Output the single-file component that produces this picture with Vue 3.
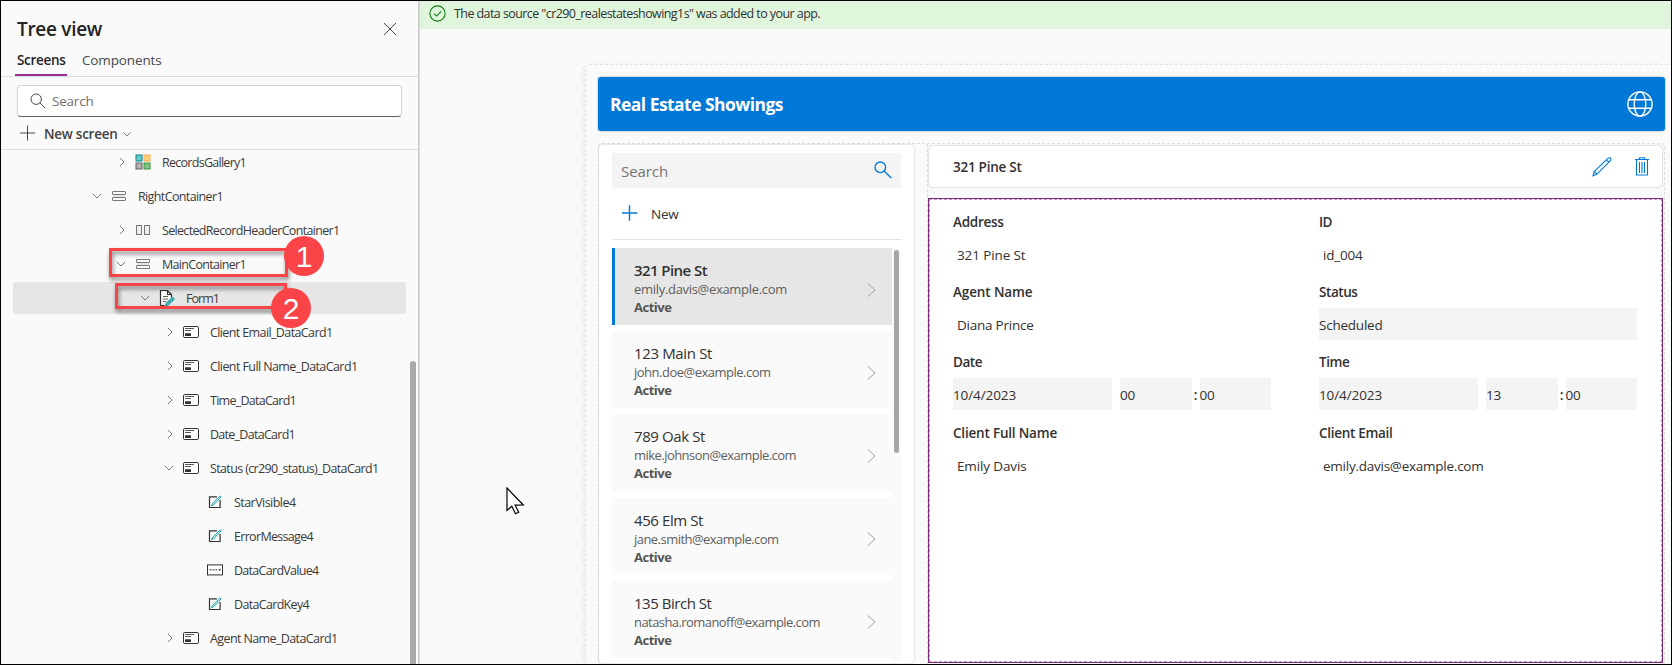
<script setup>
const rows = [
  { label: 'RecordsGallery1', level: 1, icon: 'gallery', arrow: 'right', w: 84 },
  { label: 'RightContainer1', level: 0, icon: 'vertical', arrow: 'down', w: 85 },
  { label: 'SelectedRecordHeaderContainer1', level: 1, icon: 'horizontal', arrow: 'right', w: 177.5 },
  { label: 'MainContainer1', level: 1, icon: 'vertical', arrow: 'down', w: 84 },
  { label: 'Form1', level: 2, icon: 'form', arrow: 'down', selected: true, w: 33 },
  { label: 'Client Email_DataCard1', level: 3, icon: 'card', arrow: 'right', w: 122.5 },
  { label: 'Client Full Name_DataCard1', level: 3, icon: 'card', arrow: 'right', w: 147.5 },
  { label: 'Time_DataCard1', level: 3, icon: 'card', arrow: 'right', w: 86 },
  { label: 'Date_DataCard1', level: 3, icon: 'card', arrow: 'right', w: 85 },
  { label: 'Status (cr290_status)_DataCard1', level: 3, icon: 'card', arrow: 'down', w: 168.5 },
  { label: 'StarVisible4', level: 4, icon: 'edit', w: 61.5 },
  { label: 'ErrorMessage4', level: 4, icon: 'edit', w: 79 },
  { label: 'DataCardValue4', level: 4, icon: 'combo', w: 84.5 },
  { label: 'DataCardKey4', level: 4, icon: 'edit', w: 75 },
  { label: 'Agent Name_DataCard1', level: 3, icon: 'card', arrow: 'right', w: 127.5 },
]

const records = [
  { title: '321 Pine St', email: 'emily.davis@example.com', tw: 73, ew: 153, selected: true },
  { title: '123 Main St', email: 'john.doe@example.com', tw: 78, ew: 136.5 },
  { title: '789 Oak St', email: 'mike.johnson@example.com', tw: 71, ew: 162 },
  { title: '456 Elm St', email: 'jane.smith@example.com', tw: 69, ew: 144.5 },
  { title: '135 Birch St', email: 'natasha.romanoff@example.com', tw: 77.5, ew: 186 },
]

const fields = [
  { label: 'Address', value: '321 Pine St', lw: 50.5, vw: 68.5 },
  { label: 'ID', value: 'id_004', lw: 13, vw: 39.5 },
  { label: 'Agent Name', value: 'Diana Prince', lw: 79.5, vw: 76.5 },
  { label: 'Status', value: 'Scheduled', kind: 'choice', lw: 38.5, vw: 63.5 },
  { label: 'Date', value: '10/4/2023', hour: '00', minute: '00', kind: 'date', lw: 29, vw: 63 },
  { label: 'Time', value: '10/4/2023', hour: '13', minute: '00', kind: 'date', lw: 30.5, vw: 63 },
  { label: 'Client Full Name', value: 'Emily Davis', lw: 104, vw: 69.5 },
  { label: 'Client Email', value: 'emily.davis@example.com', lw: 73.5, vw: 160.5 },
]

// Tracks each label so that it fills the width given for it.
const vFit = {
  mounted(el, { value }) {
    el.style.display = 'inline-block'
    el.style.whiteSpace = 'nowrap'
    const natural = el.getBoundingClientRect().width
    el.style.letterSpacing = `${(value - natural) / el.textContent.length}px`
  },
}
</script>

<template>
  <div class="studio">
    <aside class="tree">
      <header class="tree-head">
        <h1 v-fit="85">Tree view</h1>
        <svg class="close" width="14" height="14" viewBox="0 0 14 14"><path d="M1 1l12 12M13 1L1 13" /></svg>
      </header>
      <nav class="tabs">
        <div class="tab active"><span v-fit="48.5">Screens</span></div>
        <div class="tab"><span v-fit="79.5">Components</span></div>
      </nav>
      <div class="search">
        <svg width="16" height="16" viewBox="0 0 16 16"><circle cx="6.2" cy="6.2" r="5.2" /><path d="M10 10l5 5" /></svg>
        <span v-fit="41.5">Search</span>
      </div>
      <div class="new-screen">
        <svg width="16" height="16" viewBox="0 0 16 16"><path d="M7.500 .5v15M0 8h15" /></svg>
        <span v-fit="73.5">New screen</span>
        <svg class="caret" width="8" height="5" viewBox="0 0 8 5"><path d="M.5.5L4 4 7.500.5" /></svg>
      </div>
      <div class="rows">
        <div v-for="row in rows" :key="row.label" class="row" :class="['l' + row.level, { selected: row.selected }]">
          <span class="arrow">
            <svg v-if="row.arrow === 'right'" class="closed" width="6" height="10" viewBox="0 0 6 10"><path d="M.8.8L5 5 .8 9.200" /></svg>
            <svg v-else-if="row.arrow === 'down'" width="10" height="6" viewBox="0 0 10 6"><path d="M.8.8L5 5 9.200.8" /></svg>
          </span>
          <span class="glyph">
            <svg v-if="row.icon === 'gallery'" width="16" height="16" viewBox="0 0 16 16">
              <rect x="1" y="1" width="6" height="6" fill="#69cdcd" stroke="#038387" />
              <rect x="9" y="1" width="6" height="6" fill="#ffce83" stroke="#ffaa44" />
              <rect x="1" y="9" width="6" height="6" fill="#b3b0b0" stroke="#605e5c" />
              <rect x="9" y="9" width="6" height="6" fill="#85c287" stroke="#339b3a" />
            </svg>
            <svg v-else-if="row.icon === 'vertical'" width="14" height="12" viewBox="0 0 14 12">
              <g fill="none" stroke="#797775"><rect x=".5" y="1.500" width="13" height="3" rx=".5" /><rect x=".5" y="7.500" width="13" height="3" rx=".5" /></g>
              <path d="M1 6h12" stroke="#cfcfcf" />
            </svg>
            <svg v-else-if="row.icon === 'horizontal'" width="14" height="12" viewBox="0 0 14 12">
              <g fill="#eee" stroke="#797775"><rect x=".5" y="1.500" width="5" height="9" /><rect x="8.500" y="1.500" width="5" height="9" /></g>
            </svg>
            <svg v-else-if="row.icon === 'form'" width="16" height="18" viewBox="0 0 16 18">
              <path d="M1.500 16.500V1.500h7l4 4v3M8.500 1.500v4h4M1.500 16.500h4" fill="#fff" stroke="#323130" stroke-width="1.200" />
              <path d="M4 7.500h5M4 10h5M4 12.500h3" stroke="#605e5c" />
              <path d="M13.500 8l2 2-6 6-3 .9.900-3z" fill="#37b0b0" stroke="#038387" stroke-width=".6" />
            </svg>
            <svg v-else-if="row.icon === 'card'" width="16" height="12" viewBox="0 0 16 12">
              <rect x=".5" y=".5" width="15" height="11" rx="1.300" fill="#fff" stroke="#323130" />
              <path d="M2 2.500h9M2 4.500h6" stroke="#484644" stroke-width=".9" /><rect x="2" y="7.300" width="6" height="2.700" rx=".4" fill="#323130" stroke="none" />
            </svg>
            <svg v-else-if="row.icon === 'combo'" width="16" height="12" viewBox="0 0 16 12">
              <rect x=".5" y=".9" width="15" height="10" fill="#fff" stroke="#323130" />
              <path d="M2.500 5.800h2M5.500 5.800h2M8.500 5.800h1.500" stroke="#323130" /><path d="M11 5.200h3l-1.500 1.800z" fill="#323130" stroke="none" />
            </svg>
            <svg v-else width="14" height="14" viewBox="0 0 14 14">
              <path d="M9 1.900H1.500v10.600h10.600V5" fill="none" stroke="#323130" stroke-width="1.200" />
              <path d="M12.200.9l1 1-7.900 8.200-1.700.5.500-1.700z" fill="#e5ffff" stroke="#1a9fa0" />
            </svg>
          </span>
          <span v-fit="row.w" class="label">{{ row.label }}</span>
        </div>
      </div>
      <div class="tree-scroll"></div>
      <div class="mark mark-one"></div>
      <div class="mark mark-two"></div>
      <div class="badge badge-one">1</div>
      <div class="badge badge-two">2</div>
    </aside>

    <main class="stage">
      <div class="notice">
        <svg width="17" height="17" viewBox="0 0 17 17"><circle cx="8.500" cy="8.500" r="7.600" /><path d="M5 8.700l2.500 2.400 4.700-4.800" /></svg>
        <span v-fit="366">The data source "cr290_realestateshowing1s" was added to your app.</span>
      </div>
      <div class="canvas">
        <div class="app">
          <header class="app-bar">
            <span v-fit="173">Real Estate Showings</span>
            <svg width="26" height="26" viewBox="0 0 26 26">
              <circle cx="13" cy="13" r="12.100" /><ellipse cx="13" cy="13" rx="5.800" ry="12.100" /><path d="M2 8.700h22M2 17.300h22" />
            </svg>
          </header>
          <div class="panes">
            <section class="list">
              <div class="list-search">
                <span v-fit="47">Search</span>
                <svg width="18" height="18" viewBox="0 0 18 18"><circle cx="6.300" cy="6.300" r="5.300" /><path d="M10 10l7.300 7" /></svg>
              </div>
              <div class="list-new">
                <svg width="16" height="16" viewBox="0 0 16 16"><path d="M7.500 .3v15.400M0 8h15.400" /></svg>
                <span v-fit="27.5">New</span>
              </div>
              <div class="gallery">
                <div class="cards">
                  <article v-for="r in records" :key="r.title" class="card" :class="{ selected: r.selected }">
                    <div class="info">
                      <div class="title"><span v-fit="r.tw">{{ r.title }}</span></div>
                      <div class="email"><span v-fit="r.ew">{{ r.email }}</span></div>
                      <div class="state"><span v-fit="37.5">Active</span></div>
                    </div>
                    <svg width="9" height="14" viewBox="0 0 9 14"><path d="M.7.5L8 7 .7 13.500" /></svg>
                  </article>
                </div>
                <div class="bar"></div>
              </div>
            </section>
            <section class="detail">
              <header class="detail-head">
                <span v-fit="68.5">321 Pine St</span>
                <svg class="pencil" width="20" height="20" viewBox="0 0 20 20"><path d="M15.800 1.400q1.300-1.100 2.700-.3.900 1.300-.3 2.800L5 17.100 1 18.800l1.200-4.300zM14.300 2.900l2.600 2.500M2.200 14.500L5 17.100" /></svg>
                <svg class="bin" width="14" height="19" viewBox="0 0 14 19"><path d="M0 2.500h14M4.500 2V.8h5V2M1.500 3v15h11V3M4.500 5v11M7 5v11M9.500 5v11" /></svg>
              </header>
              <div class="form">
                <div v-for="f in fields" :key="f.label" class="field">
                  <div class="name"><span v-fit="f.lw">{{ f.label }}</span></div>
                  <div v-if="f.kind === 'date'" class="when">
                    <div class="box day"><span v-fit="f.vw">{{ f.value }}</span></div>
                    <div class="box"><span v-fit="15">{{ f.hour }}</span></div>
                    <span class="colon">:</span>
                    <div class="box"><span v-fit="15">{{ f.minute }}</span></div>
                  </div>
                  <div v-else-if="f.kind === 'choice'" class="box choice"><span v-fit="f.vw">{{ f.value }}</span></div>
                  <div v-else class="plain"><span v-fit="f.vw">{{ f.value }}</span></div>
                </div>
              </div>
            </section>
          </div>
        </div>
      </div>
      <svg class="pointer" width="19" height="28" viewBox="0 0 19 28"><path d="M1 1v22.500l4.800-4.300 3.700 7.500 3.200-1.500-3.600-7 8.200-.2z" /></svg>
    </main>
  </div>
</template>

<style>
body { margin: 0; overflow: hidden; background: #fafafa; }
</style>

<style scoped>
* { box-sizing: border-box; }
.studio { display: flex; height: 665px; border: 1px solid #000; background: #fafafa; overflow: hidden; font-family: "Open Sans", "Noto Sans", sans-serif; color: #323130; }
svg { display: block; flex: none; fill: none; stroke: #484644; }
.tree { position: relative; width: 418px; flex: none; display: flex; flex-direction: column; border-right: 1px solid #c8c8c8; box-shadow: 1px 0 1px #ddd; z-index: 1; }
.tree-head { display: flex; align-items: center; justify-content: space-between; height: 48px; padding: 7px 21px 0 16px; }
h1 { margin: 0; font-size: 19px; line-height: 24px; font-weight: 600; color: #242424; }
.tabs { height: 28px; display: flex; padding-left: 14px; border-bottom: 1px solid #dcdcdc; font-size: 13.500px; }
.tab { height: 27px; padding: 0 2px; margin-right: 13px; line-height: 23px; color: #484848; }
.tab.active { width: 52px; font-weight: 600; color: #242424; border-bottom: 2px solid #962f98; }
.search { margin: 8px 16px 0; width: 385px; height: 32px; border: 1px solid #d1d1d1; border-bottom-color: #616161; border-radius: 4px; background: #fff; display: flex; align-items: center; padding-left: 12px; gap: 6px; font-size: 13.500px; color: #707070; }
.new-screen { height: 33px; display: flex; align-items: center; padding-left: 19px; font-size: 13.500px; font-weight: 600; color: #424242; border-bottom: 1px solid #dcdcdc; }
.new-screen span { margin-left: 8px; padding-top: 1px; }
.new-screen .caret { margin: 3px 0 0 5px; stroke: #777; }
.rows { flex: 1; overflow: hidden; padding-left: 12px; display: flex; flex-direction: column; gap: 2px; }
.row { height: 32px; width: 393px; flex: none; display: flex; align-items: center; font-size: 12.500px; color: #3b3a39; border-radius: 3px; }
.row:first-child { margin-top: -4px; }
.row.selected { background: #e6e6e6; }
.label { padding-top: 1px; }
.l0 { padding-left: 76px; }
.l1 { padding-left: 100px; }
.l2 { padding-left: 124px; }
.l3 { padding-left: 148px; }
.l4 { padding-left: 172px; }
.arrow { width: 16px; display: flex; justify-content: center; }
.arrow svg { stroke: #797775; }
.arrow .closed { margin-left: 2px; }
.glyph { width: 18px; margin: 0 10px 0 5px; display: flex; justify-content: center; }
.tree-scroll { position: absolute; right: 2px; top: 360px; bottom: 0; width: 6px; border-radius: 3px 3px 0 0; background: #a9a9a9; }
.mark { position: absolute; border: 3px solid #fb4447; filter: drop-shadow(1px 3px 2px rgba(0, 0, 0, .5)); }
.mark-one { left: 108px; top: 247px; width: 179px; height: 29px; }
.mark-two { left: 114px; top: 282px; width: 172px; height: 26px; }
.badge { position: absolute; width: 40px; height: 40px; border-radius: 50%; background: #fb4447; color: #fff; font: 30px/41px "Liberation Sans", Arial, sans-serif; text-align: center; }
.badge-one { left: 283px; top: 235px; }
.badge-two { left: 270px; top: 287px; }

.stage { position: relative; flex: 1; min-width: 0; display: flex; flex-direction: column; }
.notice { height: 28px; flex: none; background: #dff6dd; display: flex; gap: 8px; padding: 4px 0 0 10px; font-size: 12.500px; line-height: 18px; color: #323130; }
.notice svg { stroke: #107c10; stroke-width: 1.100; }
.canvas { flex: 1; min-height: 0; padding: 35px 0 0 166px; background: radial-gradient(circle, #dcdcdc 0 1.200px, transparent 1.500px) 1px -1px / 24px 24px; }
.app { height: 620px; border: 1px dashed #e2e2e2; border-right: 0; border-radius: 5px 0 0 0; padding: 12px 6px 0 12px; background: #fafafa; box-shadow: -3px 2px 4px #f0f0f0; }
.app-bar { height: 54px; border-radius: 3px; background: #0078d7; box-shadow: 0 0 2px #999; color: #fff; font-size: 17.500px; font-weight: 700; display: flex; align-items: center; justify-content: space-between; padding: 0 12px; }
.app-bar svg { stroke: #fff; stroke-width: 1.400; }
.panes { margin-top: 12px; height: 522px; display: flex; border: 1px dashed #ddd; border-radius: 4px; }
.list { width: 315px; height: 518px; padding: 8px 13px 0; background: #fff; box-shadow: 0 0 2px #bbb; border-radius: 4px; flex: none; margin-top: 1px; }
.list-search { height: 35px; display: flex; align-items: center; justify-content: space-between; padding: 0 9px 0 9px; font-size: 15px; color: #757575; background: #f4f4f4; }
.list-search svg { stroke: #0078d7; stroke-width: 1.300; margin-bottom: 2px; }
.list-search span { padding-top: 1px; }
.list-new { height: 52px; display: flex; align-items: center; gap: 13px; padding: 0 0 1px 10px; font-size: 13.500px; border-bottom: 1px solid #e2e2e2; }
.list-new svg { stroke: #0078d7; stroke-width: 1.400; }
.list-new span { padding-top: 2px; }
.gallery { margin-top: 8px; height: 413px; display: flex; gap: 2px; background: linear-gradient(#fafafa, #fafafa) right / 9px 100% no-repeat; overflow: hidden; }
.cards { width: 280px; display: flex; flex-direction: column; gap: 6.200px; background: #fff; }
.card { flex: none; height: 77px; display: flex; align-items: center; justify-content: space-between; padding: 0 16px 0 22px; background: #fafafa; }
.card svg { stroke: #a0a0a0; margin-top: 6px; }
.card.selected { background: #e6e6e6; border-left: 3px solid #0078d7; padding-left: 19px; }
.info { padding-top: 3px; }
.title { font-size: 15px; line-height: 20px; color: #323130; }
.email { font-size: 13px; line-height: 18px; color: #605e5c; }
.state { font-size: 13px; line-height: 18px; font-weight: 700; color: #555; }
.selected .title { font-weight: 600; }
.selected .email { font-weight: 500; }
.bar { width: 5px; height: 203px; margin-top: 2px; border-radius: 3px; background: #a6a6a6; }
.detail { flex: 1; min-width: 0; margin-left: 13px; border-left: 1px dashed #ddd; padding: 1px 1px 0 0; display: flex; flex-direction: column; }
.detail-head { height: 41px; flex: none; margin: 1px 1px 11px 1px; border-radius: 4px; background: #fff; box-shadow: 0 0 2px #aaa; display: flex; align-items: center; padding: 0 13px 0 24px; font-size: 13.500px; font-weight: 600; }
.detail-head svg { stroke: #0078d7; stroke-width: 1.100; }
.detail-head span { padding-top: 1px; }
.pencil { margin-left: auto; }
.bin { margin-left: 23px; }
.form { height: 465px; flex: none; border: 1px solid #80277f; outline: 1px dashed #bb99bd; outline-offset: -2px; background: #fff; display: grid; grid-template-columns: 318px 318px; column-gap: 48px; grid-auto-rows: 70.200px; align-content: start; padding: 13px 0 0 24px; }
.field { font-size: 13.500px; color: #323130; }
.name { height: 21px; line-height: 21px; font-weight: 600; }
.plain { padding: 7px 0 0 4px; margin-top: 5px; line-height: 21px; }
.box { height: 32px; width: 71.500px; background: #f4f4f4; line-height: 35px; }
.choice { width: 318px; margin-top: 5px; }
.when { display: flex; margin-top: 5px; }
.day { width: 159px; margin-right: 8px; }
.colon { width: 8px; line-height: 35px; text-align: center; font-weight: 600; }
.pointer { position: absolute; left: 87px; top: 486px; fill: #fff; stroke: #000; stroke-width: 1.200; }
</style>
